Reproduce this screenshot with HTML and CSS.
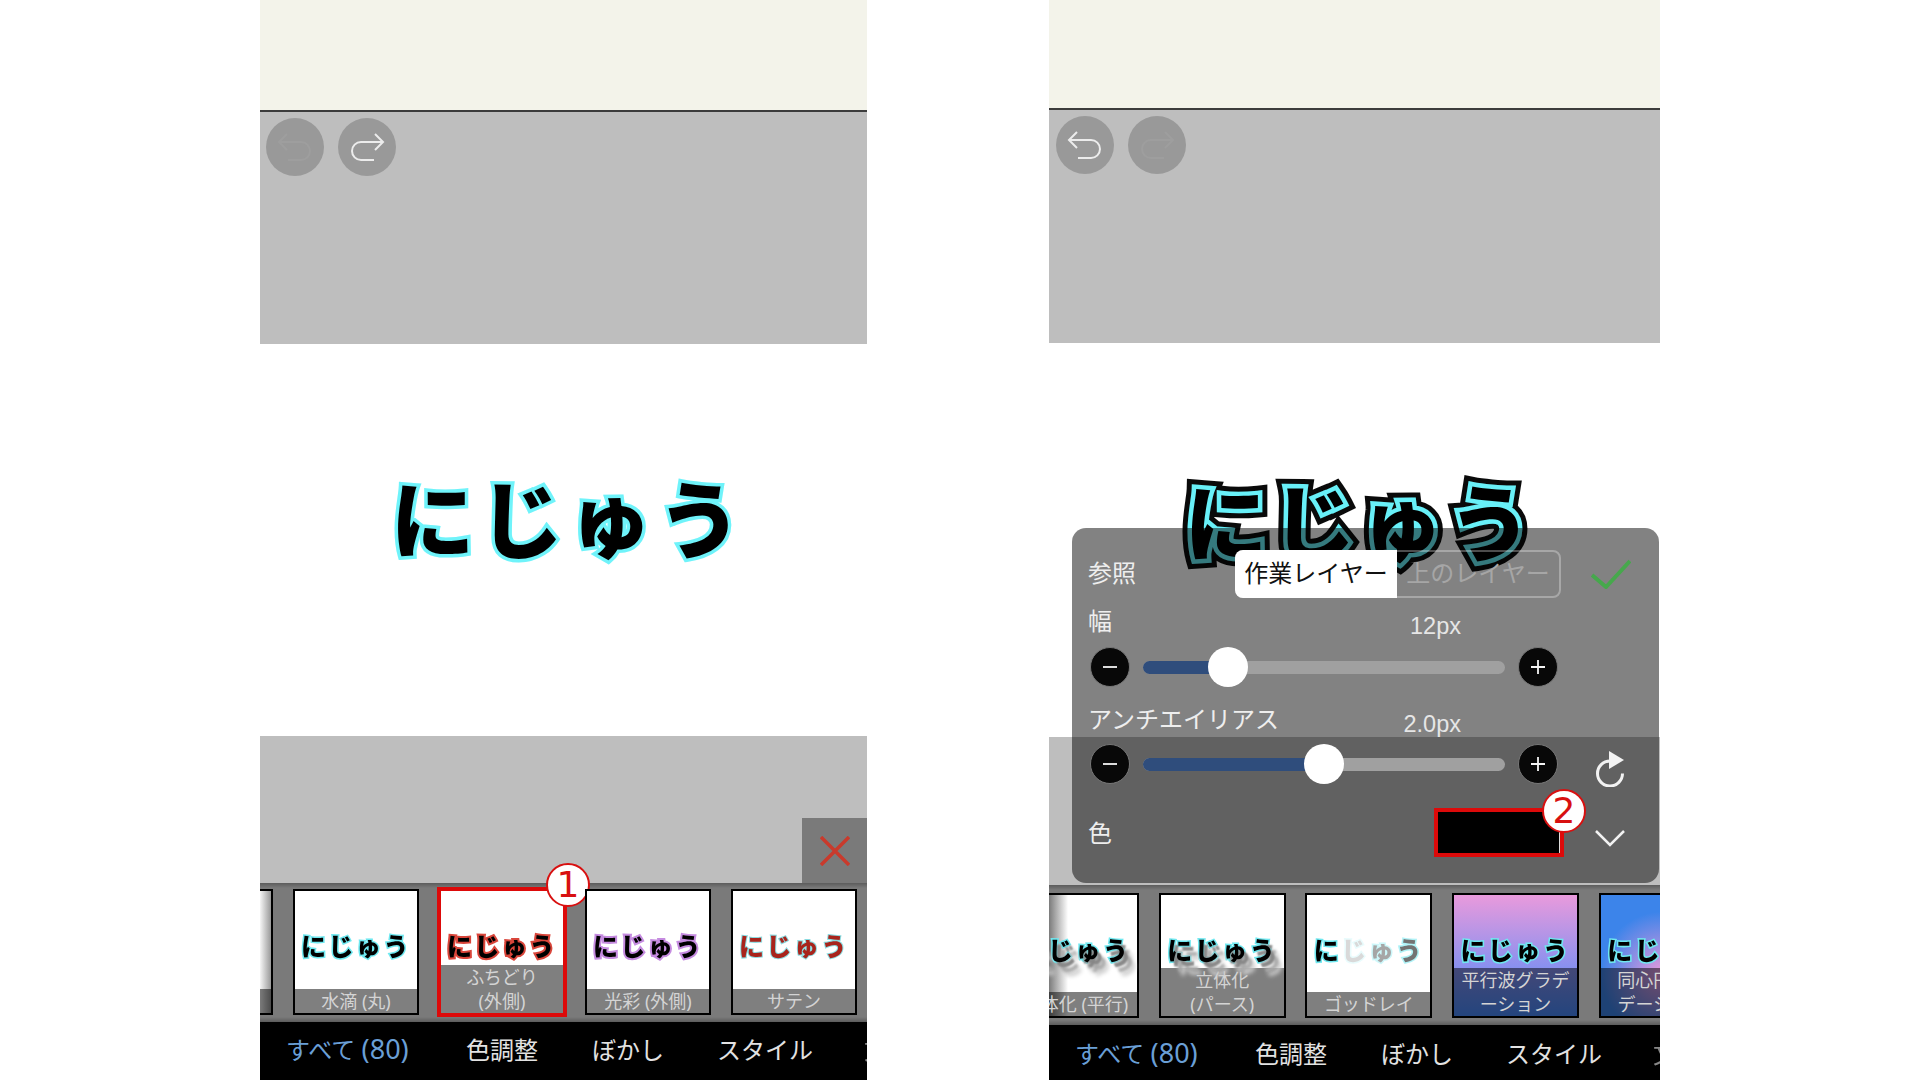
FILE: index.html
```html
<!DOCTYPE html>
<html lang="ja">
<head>
<meta charset="utf-8">
<title>にじゅう</title>
<link rel="stylesheet" href="styles.css">
</head>
<body>
<main class="page">
  <section class="screen screen-a">
    <div class="cream"></div>
    <div class="canvas-top">
      <span class="round"><svg class="ri dim" viewBox="0 0 58 58"><path d="M22 42h13a9 9 0 0 0 0-18H13M21 16l-8 8 8 8"/></svg></span>
      <span class="round"><svg class="ri" viewBox="0 0 58 58"><path d="M36 42H23a9 9 0 0 1 0-18h22M37 16l8 8-8 8"/></svg></span>
    </div>
    <div class="stage"><span class="title title-glow">にじゅう</span></div>
    <div class="canvas-bottom">
      <span class="close"><svg viewBox="0 0 30 30"><path d="M1 1l28 28M29 1L1 29"/></svg></span>
    </div>
    <div class="strip">
      <div class="thumb fade-a"><span class="word w-drop">にじゅう</span><span class="cap">グロー</span></div>
      <div class="thumb"><span class="word w-drop">にじゅう</span><span class="cap">水滴 (丸)</span></div>
      <div class="thumb selected"><span class="word w-red">にじゅう</span><span class="cap">ふちどり<br>(外側)</span><span class="badge badge-1">1</span></div>
      <div class="thumb"><span class="word w-purple">にじゅう</span><span class="cap">光彩 (外側)</span></div>
      <div class="thumb"><span class="word w-satin">にじゅう</span><span class="cap">サテン</span></div>
    </div>
    <nav class="tabs">
      <span class="tab active">すべて <span class="num">(80)</span></span><span class="tab t2">色調整</span><span class="tab t3">ぼかし</span><span class="tab t4">スタイル</span><span class="tab t5">文</span>
    </nav>
  </section>

  <section class="screen screen-b">
    <div class="cream"></div>
    <div class="canvas-top">
      <span class="round"><svg class="ri" viewBox="0 0 58 58"><path d="M22 42h13a9 9 0 0 0 0-18H13M21 16l-8 8 8 8"/></svg></span>
      <span class="round"><svg class="ri dim" viewBox="0 0 58 58"><path d="M36 42H23a9 9 0 0 1 0-18h22M37 16l8 8-8 8"/></svg></span>
    </div>
    <div class="stage"><span class="title title-double" data-text="にじゅう">にじゅう</span></div>
    <div class="canvas-bottom"></div>
    <div class="strip">
      <div class="thumb fade-b"><span class="word w-3d">にじゅう</span><span class="cap">立体化 (平行)</span></div>
      <div class="thumb"><span class="word w-3d">にじゅう</span><span class="cap">立体化<br>(パース)</span></div>
      <div class="thumb"><span class="word w-cyan"><span>に</span><span class="fa">じ</span><span class="fb">ゅ</span><span class="fc">う</span></span><span class="cap">ゴッドレイ</span></div>
      <div class="thumb grad-wave"><span class="word w-cyan">にじゅう</span><span class="cap">平行波グラデ<br>ーション</span></div>
      <div class="thumb grad-ring"><span class="word w-cyan">にじゅう</span><span class="cap">同心円グラ<br>デーション</span></div>
    </div>
    <nav class="tabs">
      <span class="tab active">すべて <span class="num">(80)</span></span><span class="tab t2">色調整</span><span class="tab t3">ぼかし</span><span class="tab t4">スタイル</span><span class="tab t5">文</span>
    </nav>

    <form class="sheet">
      <div class="row row-ref">
        <span class="lab lab-ref">参照</span>
        <div class="seg"><span class="seg-on">作業レイヤー</span><span class="seg-off">上のレイヤー</span></div>
        <svg class="check" viewBox="0 0 40 30"><path d="M1 16l14 12L39 2"/></svg>
      </div>
      <div class="row row-lab row-w"><span class="lab">幅</span><span class="val">12px</span></div>
      <div class="row row-slide">
        <span class="step"><svg viewBox="0 0 16 16"><path d="M1 8h14"/></svg></span>
        <div class="track" style="--v:23.4%"><div class="fill"><span class="knob"></span></div></div>
        <span class="step"><svg viewBox="0 0 16 16"><path d="M1 8h14M8 1v14"/></svg></span>
      </div>
      <div class="row row-lab row-aa"><span class="lab">アンチエイリアス</span><span class="val">2.0px</span></div>
      <div class="row row-slide row-slide2">
        <span class="step"><svg viewBox="0 0 16 16"><path d="M1 8h14"/></svg></span>
        <div class="track" style="--v:50%"><div class="fill"><span class="knob"></span></div></div>
        <span class="step"><svg viewBox="0 0 16 16"><path d="M1 8h14M8 1v14"/></svg></span>
        <svg class="reset" viewBox="0 0 30 36"><path class="reset-arc" d="M15 10A12.5 12.5 0 1 0 27.500 22.500"/><path class="reset-head" d="M14 0l15 9-15 9z"/></svg>
      </div>
      <div class="row row-color">
        <span class="lab">色</span>
        <span class="swatch"><span class="badge badge-2">2</span></span>
        <svg class="chev" viewBox="0 0 30 17"><path d="M1 1l14 14L29 1"/></svg>
      </div>
    </form>
  </section>
</main>
</body>
</html>
```
FILE: styles.css
```css
* { box-sizing: border-box; }
html, body { margin: 0; height: 100%; background: #fff; }
body { overflow: hidden; font-family: "Noto Sans", "Noto Sans CJK JP", sans-serif; }

.page { display: flex; width: 1920px; height: 1080px; padding-left: 260px; gap: 182px; }

.screen { position: relative; display: flex; flex-direction: column; flex: none; height: 1080px; overflow: hidden; }
.screen-a { width: 607px; }
.screen-b { width: 611px; }

.cream { flex: none; background: #f3f3ea; border-bottom: 2px solid #3c3c3c; }
.screen-a .cream { height: 112px; }
.screen-b .cream { height: 110px; }

.canvas-top { flex: none; display: flex; gap: 14px; align-items: flex-start; background: #bebebe; }
.screen-a .canvas-top { height: 232px; padding: 6px 0 0 6px; }
.screen-b .canvas-top { height: 233px; padding: 6px 0 0 7px; }

.round { width: 58px; height: 58px; border-radius: 50%; background: #999; display: block; }
.ri { display: block; width: 58px; height: 58px; fill: none; stroke: #ececec; stroke-width: 2; }
.ri.dim { stroke: #9e9e9e; }

.stage { flex: 1; display: flex; justify-content: center; align-items: center; background: #fff; }
.screen-a .stage { padding: 0 0 48px 10px; }
.screen-b .stage { padding: 0 0 42px 12px; }

.title { position: relative; font-family: "Noto Sans CJK JP", sans-serif; font-size: 84px; line-height: 1; font-weight: 900; letter-spacing: 5px; color: #000; white-space: nowrap; }
.title-glow { -webkit-text-stroke: 7px #6ff3fa; paint-order: stroke fill; }
.title-double { -webkit-text-stroke: 19px #0a0a0a; paint-order: stroke fill; color: #0a0a0a; font-size: 83px; }
.title-double::after { content: attr(data-text); position: absolute; left: 0; top: 0; -webkit-text-stroke: 9px #68f0f8; paint-order: stroke fill; color: #000; }

.canvas-bottom { flex: none; display: flex; justify-content: flex-end; align-items: flex-end; background: #bebebe; }
.screen-a .canvas-bottom { height: 147px; }
.screen-b .canvas-bottom { height: 148px; }

.close { width: 65px; height: 65px; background: #7a7a7a; display: flex; align-items: center; justify-content: center; }
.close svg { width: 30px; height: 30px; fill: none; stroke: #c93a2c; stroke-width: 3.500; }

.strip { flex: none; display: flex; background: linear-gradient(#5c5c5c, #7a7a7a 5px, #7a7a7a calc(100% - 5px), #5c5c5c); }
.screen-a .strip { height: 139px; padding-top: 6px; gap: 20px; }
.screen-b .strip { height: 140px; padding-top: 8px; gap: 19.700px; }

.thumb { position: relative; flex: none; display: flex; flex-direction: column; align-items: center; background: #fff; border: 2px solid #000; }
.screen-a .thumb { width: 126px; height: 126px; }
.screen-b .thumb { width: 127px; height: 125px; }
.thumb:first-child.fade-a { margin-left: -113px; background: linear-gradient(90deg, #fff 90%, #999); }
.thumb:first-child.fade-b { margin-left: -37px; background: linear-gradient(90deg, #777 28%, #fff 44%); }
.selected { outline: 4px solid #dd0a0a; outline-offset: -2px; border-color: #dd0a0a; }

.word { margin-top: 40px; font-family: "Noto Sans CJK JP", sans-serif; font-size: 25px; line-height: 28px; font-weight: 900; letter-spacing: 2.500px; color: #000; white-space: nowrap; paint-order: stroke fill; filter: blur(.4px); }
.w-drop, .w-cyan { -webkit-text-stroke: 3px #6fe8f0; }
.w-red { -webkit-text-stroke: 4px #d9453a; }
.w-purple { -webkit-text-stroke: 4px #c58be0; }
.w-satin { color: #a8241c; -webkit-text-stroke: 2px #8adbe0; }
.w-3d { -webkit-text-stroke: 3px #6fe8f0; text-shadow: 4px 5px 2px #888, 8px 10px 3px #aaa, 11px 14px 4px #ccc; }
.fa { opacity: .15; }
.fb { opacity: .35; }
.fc { opacity: .55; }

.cap { margin-top: auto; width: 100%; text-align: center; font-size: 18px; line-height: 24px; color: #d4d4d4; background: rgba(0, 0, 0, .5); white-space: nowrap; overflow: hidden; }

.grad-wave { background: linear-gradient(#e99adc, #488afc); }
.grad-ring { background: radial-gradient(circle at 50% 65%, #e99adc, #3c84ea 62%); }

.badge { position: absolute; width: 44px; height: 44px; display: flex; align-items: center; justify-content: center; border-radius: 50%; background: #fff; border: 2px solid #d81010; color: #d81010; font: 36px/1 "DejaVu Sans", sans-serif; }
.badge-1 { right: -27px; top: -28px; }
.badge-2 { right: -26px; top: -23px; }

.tabs { flex: none; display: flex; align-items: center; background: #000; font-size: 24px; color: #e2e2e2; white-space: nowrap; }
.screen-a .tabs { height: 58px; padding-bottom: 6px; }
.screen-b .tabs { height: 55px; }
.tab { flex: none; }
.active { color: #6a9fd6; margin-left: 26px; width: 180px; }
.num { font-size: 27px; }
.t2 { width: 126px; }
.t3 { width: 125px; }
.t4 { width: 147px; }
.t5 { opacity: .6; }

.sheet { position: absolute; left: 23px; top: 528px; width: 587px; height: 355px; padding: 22px 0 0 16px; border-radius: 14px; background: rgba(0, 0, 0, .49); color: #eee; }
.row { display: flex; align-items: center; }
.lab { font-size: 24px; line-height: 32px; }
.lab-ref { width: 147px; margin-top: -3px; }
.row-ref { height: 48px; }
.seg { display: flex; width: 326px; height: 48px; border: 2px solid rgba(255, 255, 255, .3); border-radius: 8px; font-size: 24px; line-height: 42px; color: #a6a6a6; }
.seg-on { flex: none; width: 162px; margin: -2px 0 -2px -2px; padding-top: 2px; background: #fff; color: #111; border-radius: 8px 0 0 8px; text-align: center; }
.seg-off { flex: 1; text-align: center; }
.check { width: 40px; height: 30px; margin-left: 30px; fill: none; stroke: #46a84c; stroke-width: 4; }
.row-lab { height: 32px; padding-right: 198px; justify-content: space-between; }
.row-w { margin-top: 7px; }
.row-aa { margin-top: 16px; }
.val { font: 23.500px/32px "Liberation Sans", sans-serif; padding-top: 10px; color: #e6e6e6; }
.row-slide { height: 40px; margin-top: 10px; padding-left: 2px; gap: 13px; }
.row-slide2 { margin-top: 9px; }
.step { flex: none; width: 40px; height: 40px; border-radius: 50%; background: #080808; border: 1px solid #777; display: flex; align-items: center; justify-content: center; }
.step svg { width: 16px; height: 16px; fill: none; stroke: #f4f4f4; stroke-width: 1.800; }
.track { flex: none; width: 362px; height: 13px; border-radius: 7px; background: #a0a0a0; }
.fill { position: relative; width: var(--v); height: 100%; background: #2f4d7c; border-radius: 7px 0 0 7px; }
.knob { position: absolute; right: -20px; top: -13.500px; width: 40px; height: 40px; border-radius: 50%; background: #fff; }
.reset { width: 30px; height: 36px; margin-left: 24px; margin-top: 10px; }
.reset-arc { fill: none; stroke: #f2f2f2; stroke-width: 3; }
.reset-head { fill: #f2f2f2; }
.row-color { height: 49px; margin-top: 24px; padding-right: 34px; }
.swatch { position: relative; width: 130px; height: 49px; margin-left: auto; background: #000; border: 4px solid #dd0a0a; box-shadow: inset -1px 0 0 #ddd; }
.chev { width: 30px; height: 17px; margin-left: 31px; margin-top: 12px; fill: none; stroke: #f2f2f2; stroke-width: 2.500; }
```
